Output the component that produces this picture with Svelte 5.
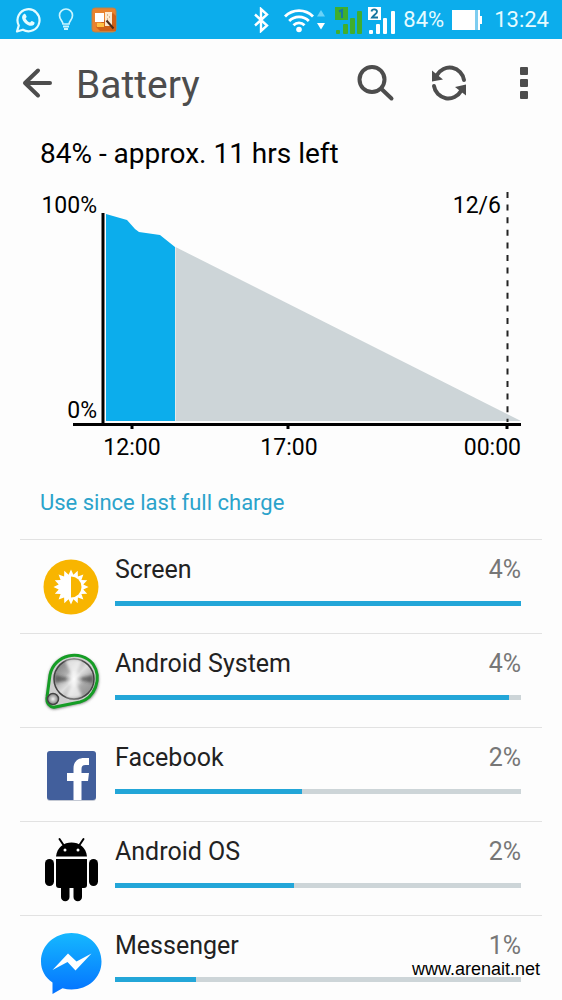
<script>
	const used = [
		{ id: 'screen', name: 'Screen', percent: 4, bar: 100 },
		{ id: 'system', name: 'Android System', percent: 4, bar: 97 },
		{ id: 'facebook', name: 'Facebook', percent: 2, bar: 46 },
		{ id: 'os', name: 'Android OS', percent: 2, bar: 44 },
		{ id: 'messenger', name: 'Messenger', percent: 1, bar: 20 }
	];

	// Sixteen-pointed sun for the Screen icon
	const sun = Array.from({ length: 32 }, (_, i) => {
		const r = i % 2 ? 12.5 : 17.5;
		const a = (i * Math.PI) / 16;
		return `${(30 + r * Math.sin(a)).toFixed(1)},${(30 - r * Math.cos(a)).toFixed(1)}`;
	}).join(' ');
</script>

<div class="page">
	<div class="status">
		<div class="notifications">
			<svg width="26" height="26" viewBox="0 0 26 26">
				<path d="M2 24.5 3.8 18.4A11 11 0 1 1 7.9 22.7Z" fill="none" stroke="#e4fcff" stroke-width="2.2" stroke-linejoin="round" />
				<path d="M8.7 7.2c.7-.7 1.5-.6 1.9.2l1 2.2c.2.5-.6 1.3-1 1.8 1 2 2.400 3.300 4.500 4.100.7-.6 1.300-1.700 1.900-1.400l2.300 1.200c.6.4.1 1.800-.4 2.400-1.400 1.500-3.600 1.400-6.100.2-2.900-1.400-4.800-3.700-5.600-6.500-.4-1.700.3-3.200 1.500-4.200Z" fill="#e4fcff" />
			</svg>
			<svg width="16" height="24" viewBox="0 0 16 24" fill="none" stroke="#c9f5ff" stroke-width="1.7">
				<path d="M5 16c0-3-3.500-4.500-3.500-8.500a6.500 6.500 0 0 1 13 0C14.500 11.500 11 13 11 16Z" />
				<path d="M5 18.500h6M6 21h4" stroke-width="2" />
			</svg>
			<svg width="26" height="26" viewBox="0 0 26 26">
				<rect x="1" y="1" width="24" height="24" rx="3" fill="#e8832e" stroke="#b5834f" />
				<path d="M22 6 25 9v15H9l-4-4Z" fill="#cf6218" />
				<path d="M4 6h9v9H4Z" fill="#fff" />
				<path d="M14 5h7v14h-7Z" fill="#fbe9cf" />
				<path d="M6 16h7v4H6Z" fill="#ffc044" />
				<path d="m15.500 13.500 7 8" stroke="#4b2c1c" stroke-width="2" />
				<path d="M16 8h1M18 10h1M16 12h1" stroke="#b98654" />
			</svg>
		</div>
		<div class="indicators">
			<svg width="23" height="26" viewBox="0 0 23 26" fill="none" stroke="#fff" stroke-width="2.4">
				<path d="m2 7.500 12 11-6 5.500V2l6 5.500-12 11" />
			</svg>
			<svg width="42" height="26" viewBox="0 0 42 26">
				<g fill="none" stroke="#fff" stroke-width="2.800">
					<path d="M1 9.500a19.500 19.500 0 0 1 28 0" />
					<path d="M5.200 14a13.700 13.700 0 0 1 19.600 0" />
					<path d="M9.500 18.200a7.800 7.800 0 0 1 11 0" />
				</g>
				<circle cx="15" cy="22.500" r="2.800" fill="#fff" />
				<path d="M33 9.500h8L37 3Z" fill="#6ad3f8" />
				<path d="M33 16h8l-4 6.500Z" fill="#fff" />
			</svg>
			<div class="signals">
				<svg width="29" height="28" viewBox="0 0 29 28" fill="#3fae2e">
					<path d="M1 1h13v13H1Z" />
					<path d="M5 5.500 8 4v8" fill="none" stroke="#1678a0" stroke-width="2" />
					<rect x="2" y="24" width="4" height="4" rx="1" />
					<rect x="9" y="18" width="5" height="10" rx="1" />
					<rect x="16" y="12" width="5" height="16" rx="1" />
					<rect x="23" y="5" width="5" height="23" rx="1" />
				</svg>
				<svg width="28" height="28" viewBox="0 0 28 28" fill="#fff">
					<path d="M1 1h13v13H1Z" />
					<path d="M4.500 5.500c.5-3 5.500-2.500 5.500.2 0 2-3.500 3.300-5 5.800h6" fill="none" stroke="#16759f" stroke-width="1.800" />
					<rect x="2" y="24" width="4" height="4" rx="1" />
					<rect x="9" y="18" width="4" height="10" rx="1" />
					<rect x="16" y="12" width="4" height="16" rx="1" />
					<rect x="24" y="5" width="4" height="23" rx="1" />
				</svg>
			</div>
			<span>84%</span>
			<svg width="34" height="22" viewBox="0 0 34 22">
				<path d="M0 1h27v20H0Z" fill="#fff" />
				<path d="M23 1h4v20h-4Z" fill="#7ecdf0" />
				<path d="M26 1h2v6h2v8h-2v6h-2Z" fill="#fff" />
			</svg>
			<span>13:24</span>
		</div>
	</div>

	<header>
		<button aria-label="Back">
			<svg width="32" height="32" viewBox="0 0 32 32" fill="none" stroke="#4d4d4d" stroke-width="4" stroke-linecap="round" stroke-linejoin="round">
				<path d="M18 3.500 5 16l13 12.500M5 16h25" />
			</svg>
		</button>
		<h1>Battery</h1>
		<button aria-label="Search">
			<svg width="40" height="40" viewBox="0 0 40 40" fill="none" stroke="#4d4d4d" stroke-width="4" stroke-linecap="round">
				<circle cx="16" cy="16.500" r="12.500" />
				<path d="m25.500 26 10 9.500" />
			</svg>
		</button>
		<button aria-label="Refresh">
			<svg width="40" height="40" viewBox="0 0 40 40" fill="none" stroke="#4d4d4d" stroke-width="4" stroke-linecap="round">
				<path d="M8 12a14.500 14.500 0 0 1 27 5" />
				<path d="M32 28a14.500 14.500 0 0 1-27-5" />
				<path d="M3 7.500v11l11-2ZM37 32.500v-11L26 24Z" fill="#4d4d4d" stroke="none" />
			</svg>
		</button>
		<button aria-label="More options">
			<svg width="40" height="40" viewBox="0 0 40 40" fill="#4d4d4d">
				<rect x="16" y="4" width="8" height="8" rx="1" />
				<rect x="16" y="16" width="8" height="8" rx="1" />
				<rect x="16" y="28" width="8" height="8" rx="1" />
			</svg>
		</button>
	</header>

	<main>
		<section class="history">
			<h2>84% - approx. 11 hrs left</h2>
			<svg class="chart" viewBox="0 0 482 280" role="img" aria-label="Battery level over time">
				<path d="M66 235V28L87 34 95 43 99 46 120 49 135 61V235Z" fill="#0cadec" />
				<path d="M135.500 235V61L481 235Z" fill="#cdd5d8" />
				<path d="M63 27v213M33 238.500h448M92 238v5M248 238v5M467 238v5" stroke="#000" stroke-width="3" fill="none" />
				<path d="M467.500 6v230" stroke="#222" stroke-width="2" stroke-dasharray="6 6.600" />
				<g text-anchor="end">
					<text x="57" y="27">100%</text>
					<text x="57" y="232">0%</text>
					<text x="461" y="27">12/6</text>
					<text x="481" y="269">00:00</text>
				</g>
				<g text-anchor="middle">
					<text x="92" y="269">12:00</text>
					<text x="249" y="269">17:00</text>
				</g>
			</svg>
			<h3>Use since last full charge</h3>
		</section>

		<ul>
			{#each used as item (item.id)}
				<li>
					<svg class="icon" width="62" height="66" viewBox="0 0 62 66">
						{#if item.id === 'screen'}
							<circle cx="31" cy="33" r="27.500" fill="#f8b500" />
							<g transform="translate(1 3)">
								<polygon points={sun} fill="#fff" />
								<path d="M30 19.500a10.500 10.500 0 0 1 0 21Z" fill="#f8b500" />
							</g>
						{:else if item.id === 'system'}
							<defs>
								<linearGradient id="steel" x1="0" y1="0" x2="1" y2="1">
									<stop offset="0" stop-color="#6d6d6d" />
									<stop offset="0.300" stop-color="#a6a6a6" />
									<stop offset="0.500" stop-color="#dedede" />
									<stop offset="0.700" stop-color="#a6a6a6" />
									<stop offset="1" stop-color="#848484" />
								</linearGradient>
								<radialGradient id="shine">
									<stop offset="0" stop-color="#fff" stop-opacity="0.900" />
									<stop offset="1" stop-color="#fff" stop-opacity="0" />
								</radialGradient>
								<filter id="glow" x="-20%" y="-20%" width="140%" height="140%">
									<feGaussianBlur stdDeviation="1.500" />
								</filter>
							</defs>
							<path d="M6 50 9 27C14 4 42 2 55 17 64 35 55 54 38 56L16 61C10 62 5 57 6 50Z" fill="#666" filter="url(#glow)" />
							<path d="M7 49 10 27C14 6 41 1 53 16 63 31 54 50 40 54L15 59C10 60 6 55 7 49Z" fill="#cfcfcf" stroke="#159d25" stroke-width="3" stroke-linejoin="round" />
							<circle cx="34" cy="31" r="20" fill="url(#steel)" stroke="#444" stroke-width="1.500" />
							<g filter="url(#glow)">
								<path d="M34 31 25 13q9-4 17 0ZM34 31l-8 18q9 3 16-1Z" fill="#fff" opacity="0.700" />
								<path d="M34 31 15 27v8ZM34 31l19-4v8Z" fill="#333" opacity="0.600" />
							</g>
							<circle cx="34" cy="31" r="9" fill="url(#shine)" />
							<circle cx="13" cy="51" r="5.500" fill="#888" stroke="#444" stroke-width="1.500" />
							<circle cx="13" cy="51" r="5" fill="url(#shine)" />
						{:else if item.id === 'facebook'}
							<rect x="7" y="10" width="49" height="49" rx="3" fill="#c3c8d3" />
							<rect x="7" y="9" width="49" height="49" rx="3" fill="#425f9c" />
							<path d="M33.500 58V39H27v-8h6.500v-4.500C33.500 19.500 38 16 44 16h5v7h-3.500c-3 0-4 1.300-4 4v4H49l-1 8h-6.500v19Z" fill="#fff" />
						{:else if item.id === 'os'}
							<path d="M16 20.500C17 11 24 6.500 31.500 6.500S46 11 47 20.500Z" />
							<path d="m19.500 3 4 6M43.500 3l-4 6" stroke="#000" stroke-width="2" stroke-linecap="round" />
							<circle cx="25" cy="14" r="1.500" fill="#fff" />
							<circle cx="38" cy="14" r="1.500" fill="#fff" />
							<path d="M16 23h31v26q0 3-3 3H19q-3 0-3-3Z" />
							<rect x="5" y="23" width="9" height="27" rx="4.500" />
							<rect x="49" y="23" width="9" height="27" rx="4.500" />
							<path d="M21 50h8.500v11a4.200 4.200 0 0 1-8.500 0ZM33.500 50H42v11a4.200 4.200 0 0 1-8.500 0Z" />
						{:else}
							<defs>
								<linearGradient id="bubble" x1="0" y1="0" x2="0" y2="1">
									<stop offset="0" stop-color="#15b8ff" />
									<stop offset="1" stop-color="#0472ff" />
								</linearGradient>
							</defs>
							<path d="M31.500 3C48 3 61.500 15 61.500 31.500S48 59.500 31.500 59.500c-3 0-6-.5-9-1.300L12.500 64V52.500C5 47.500 1 40 1 31.500 1 15 15 3 31.500 3Z" fill="url(#bubble)" />
							<path d="m12.500 40 15.500-16.500 8.500 8L51.500 23.500 35.500 40.500 27.500 32Z" fill="#fff" />
						{/if}
					</svg>
					<div class="usage">
						<div class="line">
							<span class="name">{item.name}</span>
							<span class="percent">{item.percent}%</span>
						</div>
						<div class="track">
							<div class="fill" style="width: {item.bar}%"></div>
						</div>
					</div>
				</li>
			{/each}
		</ul>
	</main>

	<div class="watermark">www.arenait.net</div>
</div>

<style>
	:global(body) {
		margin: 0;
		background: #fdfdfd;
	}

	.page {
		position: relative;
		height: 100vh;
		overflow: hidden;
		font-family: Roboto, 'Liberation Sans', sans-serif;
		color: #000;
	}

	svg {
		display: block;
		flex: none;
	}

	.status {
		display: flex;
		justify-content: space-between;
		align-items: center;
		height: 39px;
		padding: 0 13px 0 15px;
		background: #0cadec;
		color: #e6fbff;
		font-size: 22px;
	}

	.notifications {
		display: flex;
		align-items: center;
		gap: 17px;
	}

	.indicators {
		display: flex;
		align-items: center;
		gap: 8px;
	}

	.signals {
		display: flex;
		gap: 4px;
	}

	header {
		display: flex;
		align-items: center;
		gap: 31px;
		height: 88px;
		padding: 0 16px 0 20px;
	}

	button {
		display: flex;
		justify-content: center;
		padding: 0;
		border: 0;
		background: none;
	}

	header button + button {
		width: 44px;
	}

	h1 {
		flex: 1;
		margin: 0 0 0 -7px;
		padding-top: 3px;
		color: #4d4d4d;
		font-size: 39px;
		font-weight: 400;
	}

	.history {
		padding: 11px 40px 0;
	}

	h2 {
		margin: 0;
		font-size: 28px;
		font-weight: 400;
		line-height: 32px;
	}

	.chart {
		width: 100%;
		margin-top: 16px;
	}

	.chart text {
		font-size: 23px;
	}

	h3 {
		margin: 21px 0 20px;
		color: #2ba3cb;
		font-size: 22px;
		font-weight: 400;
		line-height: 32px;
	}

	ul {
		margin: 0 20px;
		padding: 0;
		list-style: none;
	}

	li {
		display: flex;
		align-items: center;
		gap: 13px;
		box-sizing: border-box;
		height: 94px;
		padding: 0 21px 0 20px;
		border-top: 1px solid #e2e2e2;
	}

	.usage {
		flex: 1;
	}

	.line {
		display: flex;
		justify-content: space-between;
		font-size: 25px;
		line-height: 32px;
	}

	.name {
		color: #222;
	}

	.percent {
		color: #777;
	}

	.track {
		height: 5px;
		margin: 15px 0 13px;
		background: #cdd5d8;
	}

	.fill {
		height: 100%;
		background: #23a6d8;
	}

	.watermark {
		position: absolute;
		right: 22px;
		bottom: 21px;
		font-family: 'Liberation Sans', Arial, sans-serif;
		font-size: 18px;
		line-height: 20px;
	}
</style>
